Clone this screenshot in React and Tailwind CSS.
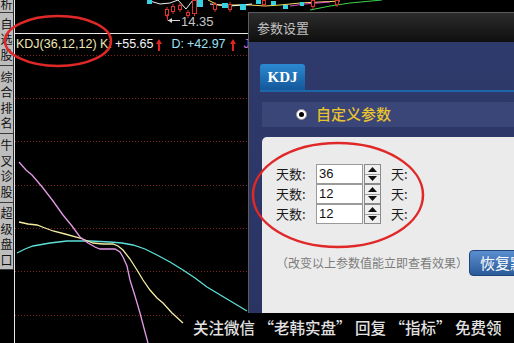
import React from "react";

const CJK = "font-['Noto_Sans_CJK_SC',sans-serif]";

function Arrow() {
  return (
    <svg width="6" height="12" viewBox="0 0 6 12" className="shrink-0">
      <path d="M3 0 L6 5 L4 5 L4 12 L2 12 L2 5 L0 5 Z" fill="#e02424" />
    </svg>
  );
}

function Segment({ chars, h, border = true }) {
  return (
    <div
      className={`flex flex-col items-center justify-center ${h} ${border ? "border-b border-[#3a3a3a]" : ""}`}
    >
      {chars.split("").map((c, i) => (
        <span key={i} className="block text-[12px] leading-[15.5px] text-[#111]">
          {c}
        </span>
      ))}
    </div>
  );
}

function Sidebar() {
  return (
    <div className={`w-[14px] h-full shrink-0 flex flex-col bg-black ${CJK}`}>
      <div className="w-[14px] bg-[#bdbdbd] border-r border-[#2e2e2e] flex flex-col overflow-hidden">
        <div className="h-[13px] shrink-0 overflow-hidden border-b border-[#3a3a3a] flex flex-col items-center">
          <span className="block text-[12px] leading-[15px] -mt-[4px] text-[#111]">析</span>
        </div>
        <Segment chars="自选股" h="h-[53px] shrink-0" />
        <Segment chars="综合排名" h="h-[68px] shrink-0" />
        <Segment chars="牛叉诊股" h="h-[69px] shrink-0" />
        <Segment chars="超级盘口" h="h-[67px] shrink-0" />
      </div>
    </div>
  );
}

function Candles() {
  const cyan = [
    [147, 0, 5, 4],
    [197, 0, 6, 7],
    [222, 3, 6, 5],
    [240, 4, 6, 6],
    [256, 0, 5, 4],
    [271, 1, 5, 4],
    [283, 5, 5, 4],
    [300, 2, 4, 4],
  ];
  const red = [
    [165, 9, 4, 7],
    [171, 6, 4, 6],
    [178, 5, 4, 5],
    [186, 12, 4, 4],
    [192, 0, 5, 14],
    [213, 4, 4, 6],
    [228, 4, 4, 6],
    [262, 0, 4, 5],
    [311, 0, 4, 7],
    [335, 0, 4, 5],
  ];
  return (
    <svg width="499" height="33" viewBox="15 0 499 33" className="block">
      <polyline points="150,1 160,4 170,3 178,0" fill="none" stroke="#f0f0f0" strokeWidth="1" />
      <polyline points="178,0 186,9 193,0" fill="none" stroke="#f0f0f0" strokeWidth="1" />
      <polyline points="208,0 218,5 250,5 265,6 280,5 300,3 320,2 340,1" fill="none" stroke="#f2e060" strokeWidth="1" />
      <polyline points="210,4 230,6 252,4" fill="none" stroke="#ffffff" strokeWidth="1" />
      <polyline points="310,10 330,6 350,3 382,0" fill="none" stroke="#3cd24a" strokeWidth="1" />
      <polyline points="290,6 305,4 330,2" fill="none" stroke="#e050d0" strokeWidth="1" />
      {cyan.map(([x, y, w, h], i) => (
        <rect key={"c" + i} x={x} y={y} width={w} height={h} fill="#36d2e2" />
      ))}
      {red.map(([x, y, w, h], i) => (
        <g key={"r" + i}>
          <line x1={x + w / 2} y1={Math.max(0, y - 2)} x2={x + w / 2} y2={y + h + 2} stroke="#e03030" strokeWidth="1" />
          <rect x={x + 0.5} y={y + 0.5} width={w - 1} height={h - 1} fill="#000" stroke="#e03030" strokeWidth="1" />
        </g>
      ))}
      <line x1="167.5" y1="14" x2="167.5" y2="20.5" stroke="#e03030" strokeWidth="1" />
      <line x1="168" y1="20.5" x2="180" y2="20.5" stroke="#d8d8d8" strokeWidth="1" />
      <path d="M168 20.5 L172 18 L172 23 Z" fill="#d8d8d8" />
      <text x="181" y="26" fill="#c8c8c8" fontSize="13" fontFamily="Liberation Sans, sans-serif">
        14.35
      </text>
    </svg>
  );
}

function KdjLines() {
  const grid = [55, 98, 141, 185, 228, 271, 315];
  return (
    <svg width="499" height="288" viewBox="15 55 499 288" className="block">
      {grid.map((y) => (
        <line key={y} x1="15" y1={y + 0.5} x2="247" y2={y + 0.5} stroke="#7a2424" strokeWidth="1" strokeDasharray="1 2" />
      ))}
      <line x1="10" y1="315.5" x2="15" y2="315.5" stroke="#888" />
      <polyline
        points="17,253 25,249 33,246 50,243 67,241 90,241 110,242 122,243 133,245 145,249 157,255 170,262 183,270 195,278 207,287 227,299 247,311"
        fill="none"
        stroke="#5ee0d8"
        strokeWidth="1.3"
      />
      <polyline
        points="19,222 28,224 37,225 45,228 53,231 65,234 80,238 93,243 103,244 113,244 118,246 123,250 130,259 137,270 143,280 150,290 157,298 163,303 172,313 183,323"
        fill="none"
        stroke="#f4eca0"
        strokeWidth="1.3"
      />
      <polyline
        points="19,162 26,170 32,175 38,182 43,188 53,201 63,215 72,226 80,237 88,243 95,247 100,249 108,249 115,249 120,252 123,257 127,266 130,280 135,296 140,313 145,332 148,343"
        fill="none"
        stroke="#e49ae8"
        strokeWidth="1.3"
      />
    </svg>
  );
}

function Chart() {
  return (
    <div className="flex-1 h-full flex flex-col bg-black border-l border-[#e8e8e8]">
      <div className="border-b border-[#e8e8e8]">
        <Candles />
      </div>
      <div className="h-[21px] flex items-center pl-[1px] font-['Liberation_Sans',sans-serif] text-[12.5px] whitespace-nowrap">
        <span className="text-[#f0e6b4]">KDJ(36,12,12) K:</span>
        <span className="ml-[3px] text-[#f4f4f4]">+55.65</span>
        <span className="ml-[3px] flex"><Arrow /></span>
        <span className="ml-[9px] text-[#9fe2f4]">D:</span>
        <span className="ml-[3px] text-[#9fe2f4]">+42.97</span>
        <span className="ml-[4px] flex"><Arrow /></span>
        <span className="ml-[8px] text-[#d070d4]">J:</span>
      </div>
      <KdjLines />
    </div>
  );
}

function Spinner() {
  return (
    <div className="ml-[1px] w-[17px] h-[20px] border border-[#8a8a8a] bg-[#efefef] flex flex-col">
      <div className="flex-1 flex items-center justify-center border-b border-[#a0a0a0]">
        <svg width="9" height="5" viewBox="0 0 9 5"><path d="M4.5 0 L9 5 L0 5 Z" fill="#111" /></svg>
      </div>
      <div className="flex-1 flex items-center justify-center">
        <svg width="9" height="5" viewBox="0 0 9 5"><path d="M0 0 L9 0 L4.5 5 Z" fill="#111" /></svg>
      </div>
    </div>
  );
}

function ParamRow({ value }) {
  return (
    <div className="h-[20px] flex items-center">
      <span className={`w-[40px] text-[13px] text-[#1a1a1a] ${CJK}`}>天数:</span>
      <div className="w-[47px] h-[20px] border border-[#9a9a9a] bg-white flex items-center pl-[2px] font-['Liberation_Sans',sans-serif] text-[13px] text-[#111]">
        {value}
      </div>
      <Spinner />
      <span className={`ml-[10px] text-[13px] text-[#1a1a1a] ${CJK}`}>天:</span>
    </div>
  );
}

function Dialog() {
  return (
    <div className="absolute left-[248px] top-[12px] w-[290px] h-[331px] border-l border-t border-[#5c5c5c] flex flex-col">
      <div className={`h-[29px] bg-gradient-to-b from-[#2c2c2c] to-[#0f0f0f] flex items-center pl-[8px] text-[13px] text-[#c2c2c2] ${CJK}`}>
        参数设置
      </div>
      <div className="flex-1 bg-gradient-to-b from-[#2f3a6c] to-[#2a3463] flex flex-col pl-[11px] pt-[22px]">
        <div className="w-[45px] h-[26px] rounded-t-[3px] bg-gradient-to-b from-[#2c8ad2] to-[#13589a] flex items-center justify-center text-white font-bold text-[15px] font-['Liberation_Serif',serif]">
          KDJ
        </div>
        <div className="h-[2px] bg-[#1c66aa]" />
        <div className="ml-[2px] mt-[10px] h-[25px] bg-[#3a4578] flex items-center pl-[34px]">
          <div className="w-[11px] h-[11px] rounded-full bg-white border border-[#9a9a9a] flex items-center justify-center">
            <div className="w-[5px] h-[5px] rounded-full bg-black" />
          </div>
          <span className={`ml-[9px] text-[15px] font-medium text-[#e9c32e] ${CJK}`}>自定义参数</span>
        </div>
        <div className="ml-[2px] mt-[10px] flex-1 bg-[#ebebeb] rounded-tl-[5px] pl-[14px] pt-[27px] flex flex-col">
          <ParamRow value="36" />
          <ParamRow value="12" />
          <ParamRow value="12" />
          <div className="mt-[26px] h-[26px] flex items-center whitespace-nowrap">
            <span className={`text-[12px] text-[#7c7c7c] ${CJK}`}>（改变以上参数值能立即查看效果）</span>
            <div className={`ml-[1px] w-[70px] h-[26px] rounded-[4px] border border-[#1f467c] bg-gradient-to-b from-[#5b8fd0] to-[#2b5a98] flex items-center pl-[10px] text-white text-[15px] ${CJK}`}>
              恢复默认
            </div>
          </div>
        </div>
      </div>
    </div>
  );
}

function Overlays() {
  return (
    <>
      <svg className="absolute inset-0 pointer-events-none" width="514" height="343" viewBox="0 0 514 343">
        <ellipse cx="58" cy="41" rx="53" ry="25" fill="none" stroke="#e02828" strokeWidth="2.5" />
        <ellipse cx="338" cy="195" rx="85" ry="52" fill="none" stroke="#e02828" strokeWidth="2.5" />
      </svg>
      <div
        className={`absolute left-[185px] top-[313px] right-0 bottom-0 bg-black flex items-center pl-[8px] whitespace-nowrap text-[15.5px] font-medium text-[#e0e0e0] [text-shadow:0_0_2px_#000] ${CJK}`}
      >
        关注微信 “老韩实盘” 回复 “指标” 免费领
      </div>
    </>
  );
}

export default function App() {
  return (
    <div className="relative w-[514px] h-[343px] overflow-hidden bg-black flex">
      <Sidebar />
      <Chart />
      <Dialog />
      <Overlays />
    </div>
  );
}
